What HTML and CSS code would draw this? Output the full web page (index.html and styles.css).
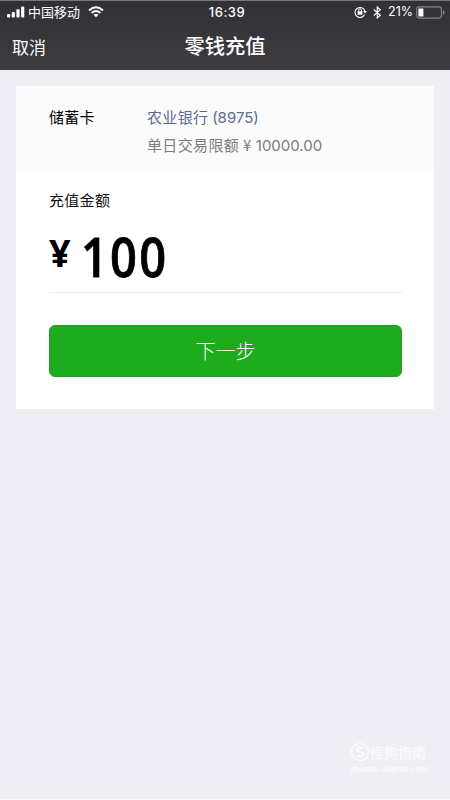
FILE: index.html
```
<!DOCTYPE html>
<html lang="zh-CN">
<head>
<meta charset="utf-8">
<title>零钱充值</title>
<link rel="stylesheet" href="styles.css">
</head>
<body>
<div class="screen">
  <header class="top">
    <div class="status">
      <div class="status-left">
        <svg class="signal" width="18" height="12" viewBox="0 0 18 12" fill="#fff"><rect x="0" y="8" width="3.2" height="3.5" rx="1"/><rect x="4.7" y="6" width="3.2" height="5.5" rx="1"/><rect x="9.4" y="3.3" width="3.2" height="8.2" rx="1"/><rect x="14.1" y="0.5" width="3.2" height="11" rx="1"/></svg>
        <span class="carrier">中国移动</span>
        <svg class="wifi" width="16" height="12" viewBox="0 0 16 12" fill="none" stroke="#fff" stroke-width="2"><path d="M1 4.4Q8-1.8 15 4.4M3.5 7.1Q8 3 12.5 7.1"/><path d="M5.5 8.7Q8 6.6 10.5 8.7L8 11.3Z" fill="#fff" stroke="none"/></svg>
      </div>
      <span class="time">16:39</span>
      <div class="status-right">
        <svg class="lock" width="13" height="12" viewBox="0 0 13 12" fill="none" stroke="#fff"><path d="M10.5 8.7A5 5 0 1 1 10.8 5" stroke-width="1.1"/><path d="M9 5h4l-2 2.6z" fill="#fff" stroke="none"/><rect x="3.6" y="5.2" width="4.8" height="3.5" fill="#fff" stroke="none"/><path d="M4.6 5.4V4.2a1.4 1.4 0 0 1 2.8 0v1.2"/></svg>
        <svg class="bluetooth" width="9" height="13" viewBox="0 0 9 13" fill="none" stroke="#fff" stroke-width="1.2"><path d="M.8 3.5l6.5 5.7-3 2.7V1.1l3 2.7-6.5 5.7"/></svg>
        <span class="percent">21%</span>
        <svg class="battery" width="29" height="13" viewBox="0 0 29 13"><rect x=".7" y=".9" width="24.7" height="11.2" rx="2.5" fill="none" stroke="#85858a" stroke-width="1.1"/><rect x="2.4" y="2.5" width="5" height="8" rx=".6" fill="#fff"/><path d="M27 4.3q1.6.5 1.6 2.2T27 8.7z" fill="#85858a"/></svg>
      </div>
    </div>
    <nav class="nav">
      <span class="cancel">取消</span>
      <h1 class="title">零钱充值</h1>
    </nav>
  </header>
  <main class="card">
    <section class="bank">
      <span class="label">储蓄卡</span>
      <div class="detail">
        <div class="bank-name">农业银行 <span class="digits">(8975)</span></div>
        <div class="limit">单日交易限额<span class="limit-yen">¥</span><span class="digits">10000.00</span></div>
      </div>
    </section>
    <section class="form">
      <div class="amount-label">充值金额</div>
      <div class="amount"><span class="yen">¥</span><span class="value">100</span></div>
      <button class="next">下一步</button>
    </section>
  </main>
  <div class="watermark">
    <svg width="20" height="20" viewBox="0 0 20 20" fill="none" stroke="#fafafd"><circle cx="10" cy="10" r="8.5" stroke-width="1.7"/><path d="M13.5 6.2Q7 4.5 6.8 7.5C6.7 10 13.3 9.3 13.2 12.3Q13 15.5 6.3 13.6" stroke-width="2"/></svg>
    <span class="brand">搜狗指南</span>
    <span class="site">zhinan.sogou.com</span>
  </div>
</div>
</body>
</html>
```
FILE: styles.css
```
* { box-sizing: border-box; }
body { margin: 0; font-family: "Noto Sans CJK SC", sans-serif; }
.screen { position: relative; width: 450px; height: 800px; overflow: hidden; background: #efeef4; border-bottom: 1px solid #fafafc; }
.top { height: 70px; color: #fff; background: linear-gradient(#303035, #3d3c42); border-top: 1px solid #77777b; }
.status { display: grid; grid-template-columns: 1fr auto 1fr; align-items: center; height: 22px; padding: 0 5px 0 7px; }
.status-left, .status-right { display: flex; align-items: center; }
.status-right { justify-content: flex-end; }
.carrier { margin-left: 3px; font-size: 13px; line-height: 20px; }
.wifi { margin-left: 8px; }
.time { padding-left: 2px; font: 500 13px/20px Inter, sans-serif; letter-spacing: .5px; }
.bluetooth { margin-left: 6px; }
.percent { margin: 0 3px 0 6px; font: 12.5px/20px Inter, sans-serif; }
.nav { position: relative; height: 47px; padding: 11px 12px; }
.cancel { display: block; font-size: 17px; line-height: 25px; }
.title { position: absolute; left: 0; right: 0; top: 7px; margin: 0; text-align: center; font-size: 20.3px; font-weight: 500; line-height: 30px; }
.card { width: 418px; height: 323px; margin: 16px 0 0 16px; background: #fff; }
.bank { display: flex; height: 85px; padding: 19px 33px; background: #fbfbfb; font-size: 15px; line-height: 24px; }
.label { width: 98px; color: #000; letter-spacing: .3px; }
.bank-name { height: 24px; color: #576b95; letter-spacing: .35px; }
.limit { height: 24px; margin-top: 4px; color: #7c7c7c; letter-spacing: .35px; }
.limit-yen { margin: 0 4px 0 4px; }
.digits { font-family: Inter, sans-serif; font-size: 15px; letter-spacing: 0; }
.form { padding: 17px 32px 0 33px; }
.amount-label { font-size: 15px; line-height: 24px; color: #111; letter-spacing: .3px; }
.amount { display: flex; align-items: flex-start; height: 81px; border-bottom: 1px solid #ececec; color: #000; font-family: "Open Sans", sans-serif; }
.yen { width: 32px; font-size: 38px; font-weight: 700; line-height: 80px; }
.value { font-size: 54px; font-weight: 600; line-height: 88px; letter-spacing: 2.6px; -webkit-text-stroke: .8px #000; transform: scaleX(.87); transform-origin: left; }
.next { display: block; width: 353px; height: 52px; margin: 32px 0 0; padding: 0; border: 1px solid #279a27; border-radius: 6px; background: #1dac1b; color: #fff; font-family: "Noto Sans CJK SC", sans-serif; font-size: 20px; font-weight: 300; line-height: 48px; }
.watermark { position: absolute; left: 350px; top: 742px; display: grid; grid-template-columns: 20px auto; align-items: center; color: #fafafd; }
.brand { font-size: 14px; line-height: 20px; font-weight: 500; }
.site { grid-column: 1 / 3; font: 700 9px/14px "Liberation Sans", sans-serif; }
```
